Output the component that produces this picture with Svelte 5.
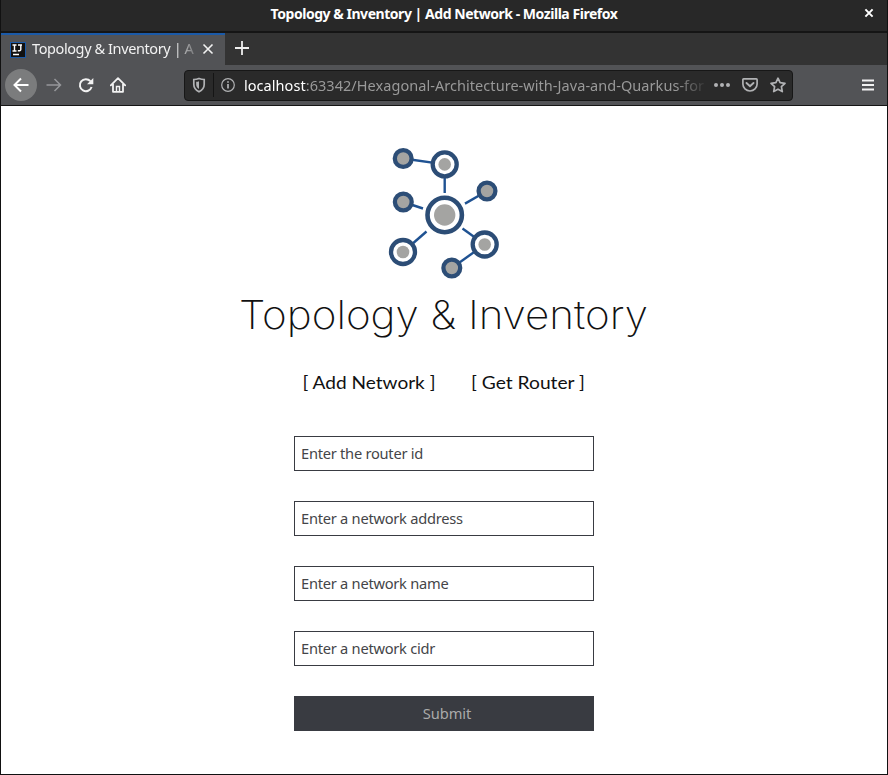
<script>
  const fields = ['Enter the router id', 'Enter a network address', 'Enter a network name', 'Enter a network cidr'];
  const links = [
    [403.2, 158.5, 444.7, 164.4],
    [444.7, 165, 444.7, 193],
    [465, 203.6, 487, 191],
    [403.3, 202, 423, 208.5],
    [403, 252, 426.5, 231.5],
    [462.5, 228.5, 484.7, 244.5],
    [484.7, 244.5, 451.8, 268]
  ];
  const small = [[403.2, 158.5], [487, 191], [403.3, 202], [451.8, 268]];
  const medium = [[444.7, 164.4], [403, 252], [484.7, 244.5]];
</script>

<div class="window">
  <header class="titlebar">
    <span class="wtitle">Topology &amp; Inventory | Add Network - Mozilla Firefox</span>
    <svg class="wclose" width="10" height="10" viewBox="0 0 10 10"><path d="M1.4 1.4l7.2 7.2M8.6 1.4L1.4 8.6" stroke="#fff" stroke-width="2" /></svg>
  </header>

  <div class="tabs">
    <div class="tab">
      <svg class="fav" width="16" height="16" viewBox="0 0 16 16">
        <rect width="16" height="16" fill="#1b5aa8" /><rect x="1" y="1" width="14" height="14" fill="#111" />
        <path d="M2.5 3h4M4.5 3v6M2.5 9h4M8 3h4M10.8 3v4.5q0 1.5-3 1.3M3 12.5h6" fill="none" stroke="#fff" stroke-width="1.4" />
      </svg>
      <span class="tabtext">Topology &amp; Inventory | A</span>
      <svg class="tclose" width="12" height="12" viewBox="0 0 12 12"><path d="M1.5 1.5l9 9M10.5 1.5l-9 9" stroke="#f2f2f2" stroke-width="1.6" /></svg>
    </div>
    <svg class="plus" width="14" height="14" viewBox="0 0 14 14"><path d="M7 0v14M0 7h14" stroke="#eee" stroke-width="1.8" /></svg>
  </div>

  <nav class="toolbar">
    <span class="back"><svg width="16" height="16" viewBox="0 0 16 16"><path d="M15.5 8H1.5M8 1.5L1.5 8 8 14.5" fill="none" stroke="#fff" stroke-width="2" /></svg></span>
    <svg class="fwd" width="16" height="16" viewBox="0 0 16 16"><path d="M.5 8h14M8.5 2l6 6-6 6" fill="none" stroke="#96979a" stroke-width="1.5" /></svg>
    <svg class="reload" width="16" height="16" viewBox="0 0 16 16"><path d="M13.6 10A6 6 0 1 1 12.4 4.2" fill="none" stroke="#f2f2f2" stroke-width="2" /><path d="M15.3 1v6.2H9z" fill="#f2f2f2" /></svg>
    <svg class="home" width="16" height="16" viewBox="0 0 16 16"><path d="M.8 8.3L8 1.2l7.2 7.1M3 7v7.8h10V7" fill="none" stroke="#f2f2f2" stroke-width="1.8" stroke-linecap="round" stroke-linejoin="round" /><path d="M6.5 14.5v-5h3v5" fill="none" stroke="#f2f2f2" stroke-width="1.4" /></svg>
    <div class="url">
      <svg width="14" height="16" viewBox="0 0 14 16"><path d="M7 1.5c2 .8 3.5 1 5.2 1v5c0 3.5-2 5.6-5.2 7.3C3.8 13.1 1.8 11 1.8 7.5v-5C3.5 2.5 5 2.3 7 1.5z" fill="none" stroke="#b1b2b4" stroke-width="1.7" /><path d="M7 4.2v7.8c-2-1.3-2.8-2.6-2.8-4.5V4.8Q6 4.7 7 4.2z" fill="#b1b2b4" /></svg>
      <i class="sep"></i>
      <svg width="14" height="14" viewBox="0 0 14 14"><circle cx="7" cy="7" r="6.3" fill="none" stroke="#b1b2b4" stroke-width="1.2" /><path d="M7 6v4.5M7 3.2v1.6" stroke="#b1b2b4" stroke-width="1.7" /></svg>
      <span class="address"><b>localhost</b>:63342/Hexagonal-Architecture-with-Java-and-Quarkus-for</span>
      <svg class="dots" width="18" height="6" viewBox="0 0 18 6"><g fill="#b1b2b4"><circle cx="3" cy="3" r="2" /><circle cx="9" cy="3" r="2" /><circle cx="15" cy="3" r="2" /></g></svg>
      <svg class="pocket" width="16" height="16" viewBox="0 0 16 16"><path d="M1.7 1.8h12.6q.8 0 .8.9V7A7.1 7 0 0 1 .9 7V2.7q0-.9.8-.9z" fill="none" stroke="#b1b2b4" stroke-width="1.7" /><path d="M4.5 6L8 9.3 11.5 6" fill="none" stroke="#b1b2b4" stroke-width="1.9" stroke-linecap="round" /></svg>
      <svg class="star" width="16" height="16" viewBox="0 0 16 16"><path d="M8 1.2l2.1 4.5 4.9.6-3.6 3.4.9 4.9L8 12.2l-4.3 2.4.9-4.9L1 6.3l4.9-.6z" fill="none" stroke="#b1b2b4" stroke-width="1.7" stroke-linejoin="round" /></svg>
    </div>
    <svg class="menu" width="12" height="12" viewBox="0 0 12 12"><path d="M0 1.5h12M0 6h12M0 10.5h12" stroke="#f2f2f2" stroke-width="2" /></svg>
  </nav>

  <main>
    <svg class="logo" width="130" height="145" viewBox="380 140 130 145">
      {#each links as [x1, y1, x2, y2]}
        <line {x1} {y1} {x2} {y2} stroke="#1f5292" stroke-width="2.4" />
      {/each}
      {#each small as [cx, cy]}
        <circle {cx} {cy} r="8.4" fill="#a4a4a2" stroke="#2c4d76" stroke-width="4.3" />
      {/each}
      {#each medium as [cx, cy]}
        <circle {cx} {cy} r="12" fill="#fff" stroke="#2c4d76" stroke-width="4.3" />
        <circle {cx} {cy} r="6.3" fill="#a4a4a2" />
      {/each}
      <circle cx="444.7" cy="215" r="17.2" fill="#fff" stroke="#2c4d76" stroke-width="4.6" />
      <circle cx="444.7" cy="215" r="10.7" fill="#a4a4a2" />
    </svg>

    <svg class="heading" width="420" height="56" viewBox="234 288 420 56" role="heading" aria-level="1">
      <text x="239" y="328.5" textLength="409" lengthAdjust="spacingAndGlyphs">Topology &amp; Inventory</text>
    </svg>
    <svg class="links" width="300" height="30" viewBox="294 368 300 30">
      <text x="302.5" y="389" textLength="133" lengthAdjust="spacingAndGlyphs">[ Add Network ]</text>
      <text x="471" y="389" textLength="114" lengthAdjust="spacingAndGlyphs">[ Get Router ]</text>
    </svg>

    <form>
      {#each fields as placeholder}
        <input {placeholder} />
      {/each}
      <button type="button">Submit</button>
    </form>
  </main>
</div>

<style>
  :global(body) { margin: 0; }
  .window { box-sizing: border-box; width: 888px; height: 775px; border: 1px solid #111; border-top: 0; background: #fff; font: 14.67px 'Noto Sans', sans-serif; overflow: hidden; display: flex; flex-direction: column; }
  svg { display: block; flex: none; }
  .titlebar { box-sizing: border-box; height: 33px; background: #282828; border-bottom: 2px solid #151515; display: flex; align-items: center; justify-content: center; position: relative; padding-bottom: 5px; }
  .wtitle { color: #fff; font-weight: 700; font-size: 14px; letter-spacing: -0.46px; white-space: nowrap; }
  .wclose { position: absolute; right: 13px; top: 8px; }
  .tabs { box-sizing: border-box; height: 32px; background: #333; display: flex; align-items: center; }
  .tab { box-sizing: border-box; width: 224px; height: 32px; background: #525356; border-top: 2px solid #1b5aa8; display: flex; align-items: center; padding-left: 9px; }
  .tabtext { width: 162px; margin: -4px 0 0 6px; color: #f2f2f2; font-size: 14.5px; letter-spacing: -0.4px; white-space: nowrap; -webkit-mask-image: linear-gradient(90deg, #000 140px, transparent 170px); mask-image: linear-gradient(90deg, #000 140px, transparent 170px); }
  .tclose { margin: -2px 0 0 8px; }
  .plus { margin: -2px 0 0 10px; }
  .toolbar { box-sizing: border-box; height: 41px; background: #525356; border-bottom: 1px solid #151515; display: flex; align-items: center; padding-left: 4px; }
  .back { width: 32px; height: 32px; border-radius: 50%; background: #7b7c7d; display: flex; align-items: center; justify-content: center; }
  .fwd { margin-left: 9px; }
  .reload { margin-left: 16px; }
  .home { margin-left: 16px; }
  .url { box-sizing: border-box; width: 609px; height: 31px; margin-left: 58px; border: 1px solid #171717; border-radius: 4px; background: #2a2a2a; display: flex; align-items: center; padding-left: 7px; }
  .sep { width: 1px; height: 24px; background: #151515; margin: 0 7px; }
  .address { width: 462px; margin-left: 9px; color: #999; font-size: 14.5px; letter-spacing: 0.05px; white-space: nowrap; -webkit-mask-image: linear-gradient(90deg, #000 432px, transparent 464px); mask-image: linear-gradient(90deg, #000 432px, transparent 464px); }
  .address b { color: #fff; font-weight: 400; }
  .dots { margin-left: 7px; }
  .pocket { margin-left: 11px; }
  .star { margin-left: 12px; }
  .menu { margin-left: 69px; }
  main { flex: 1; display: flex; flex-direction: column; align-items: center; padding-top: 34px; }
  .logo { margin-left: 2px; }
  .heading { margin-top: 3px; }
  .heading text { font: 200 39px Inter, sans-serif; fill: #111; }
  .links { margin-top: 24px; }
  .links text { font: 400 16.5px Lato, sans-serif; fill: #111; }
  form { display: flex; flex-direction: column; gap: 30px; margin-top: 38px; }
  input, button { box-sizing: border-box; width: 300px; height: 35px; border: 1px solid #393b42; border-radius: 0; background: #fff; padding: 0 6px 2px; font: 14.67px 'Noto Sans', sans-serif; letter-spacing: -0.26px; }
  input::placeholder { color: #444548; opacity: 1; }
  button { background: #393b41; color: #aaa; padding-left: 12px; letter-spacing: -0.1px; }
</style>
